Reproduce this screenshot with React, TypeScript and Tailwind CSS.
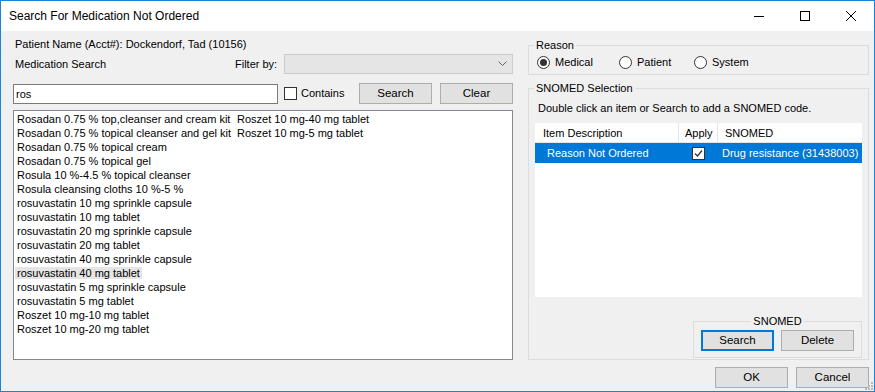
import { useState } from "react";

const leftColumn = [
  "Rosadan 0.75 % top,cleanser and cream kit",
  "Rosadan 0.75 % topical cleanser and gel kit",
  "Rosadan 0.75 % topical cream",
  "Rosadan 0.75 % topical gel",
  "Rosula 10 %-4.5 % topical cleanser",
  "Rosula cleansing cloths 10 %-5 %",
  "rosuvastatin 10 mg sprinkle capsule",
  "rosuvastatin 10 mg tablet",
  "rosuvastatin 20 mg sprinkle capsule",
  "rosuvastatin 20 mg tablet",
  "rosuvastatin 40 mg sprinkle capsule",
  "rosuvastatin 40 mg tablet",
  "rosuvastatin 5 mg sprinkle capsule",
  "rosuvastatin 5 mg tablet",
  "Roszet 10 mg-10 mg tablet",
  "Roszet 10 mg-20 mg tablet",
];

const rightColumn = ["Roszet 10 mg-40 mg tablet", "Roszet 10 mg-5 mg tablet"];

function WinButton({ label, focused }: { label: string; focused?: boolean }) {
  return (
    <button
      className={
        "flex h-[21px] w-[73px] items-center justify-center bg-[#e1e1e1] text-[11.5px] text-black " +
        (focused ? "border-2 border-[#0078d7]" : "border border-[#adadad]")
      }
    >
      {label}
    </button>
  );
}

function Radio({ label, checked, onClick }: { label: string; checked: boolean; onClick: () => void }) {
  return (
    <div className="flex cursor-default items-center gap-[5px]" onClick={onClick}>
      <span className="flex h-[13px] w-[13px] items-center justify-center rounded-full border border-[#333] bg-white">
        {checked && <span className="h-[7px] w-[7px] rounded-full bg-[#333]" />}
      </span>
      <span>{label}</span>
    </div>
  );
}

function ListRow({ text, hover }: { text: string; hover?: boolean }) {
  return (
    <div className="h-[14px] leading-[14px]">
      <span className={"whitespace-nowrap px-[2px] " + (hover ? "bg-[#e5e5e5]" : "")}>{text}</span>
    </div>
  );
}

export default function App() {
  const [reason, setReason] = useState("Medical");
  const [query, setQuery] = useState("ros");

  return (
    <div
      className="flex h-[392px] w-[875px] flex-col border border-[#1883d7] bg-[#f0f0f0] text-[12px] text-black"
      style={{ fontFamily: "'Liberation Sans', Arial, sans-serif" }}
    >
      {/* title bar */}
      <div className="flex h-[30px] shrink-0 items-center bg-white">
        <div className="flex-1 pl-[8px] text-[12px]">Search For Medication Not Ordered</div>
        <div className="flex h-full">
          <div className="flex w-[46px] items-center justify-center">
            <svg width="10" height="10" viewBox="0 0 10 10">
              <path d="M0 5.5h10" stroke="#000" strokeWidth="1" />
            </svg>
          </div>
          <div className="flex w-[46px] items-center justify-center">
            <svg width="10" height="10" viewBox="0 0 10 10">
              <rect x="0.5" y="0.5" width="9" height="9" fill="none" stroke="#000" strokeWidth="1" />
            </svg>
          </div>
          <div className="flex w-[46px] items-center justify-center">
            <svg width="10" height="10" viewBox="0 0 10 10">
              <path d="M0 0L10 10M10 0L0 10" stroke="#000" strokeWidth="1" />
            </svg>
          </div>
        </div>
      </div>

      <div className="relative flex flex-1 pl-[12px] pr-[5px] text-[11px]">
        {/* left side */}
        <div className="flex w-[500px] flex-col">
          <div className="mt-[6px] ml-[2px] h-[14px] leading-[14px]">
            Patient Name (Acct#): Dockendorf, Tad (10156)
          </div>
          <div className="mt-[3px] flex h-[20px] items-center">
            <span className="ml-[2px] w-[220px]">Medication Search</span>
            <span className="w-[49px]">Filter by:</span>
            <div className="flex h-[20px] flex-1 items-center justify-end border border-[#cccccc] bg-[#e5e5e5] pr-[5px]">
              <svg width="9" height="6" viewBox="0 0 9 6">
                <path d="M0.5 0.5L4.5 4.5L8.5 0.5" fill="none" stroke="#606060" strokeWidth="1" />
              </svg>
            </div>
          </div>
          <div className="mt-[9px] flex h-[21px] items-center">
            <input
              value={query}
              onChange={(e) => setQuery(e.target.value)}
              className="h-[20px] w-[265px] border border-[#7a7a7a] bg-white px-[2px] text-[11px] outline-none"
            />
            <span className="ml-[6px] h-[13px] w-[13px] border border-[#333] bg-white" />
            <span className="ml-[4px] w-[58px]">Contains</span>
            <WinButton label="Search" />
            <div className="w-[8px]" />
            <WinButton label="Clear" />
          </div>
          <div className="mt-[6px] flex h-[250px] border border-[#828790] bg-white pl-[1px] pt-[1px]">
            <div className="w-[220px]">
              {leftColumn.map((t) => (
                <ListRow key={t} text={t} hover={t === "rosuvastatin 40 mg tablet"} />
              ))}
            </div>
            <div>
              {rightColumn.map((t) => (
                <ListRow key={t} text={t} />
              ))}
            </div>
          </div>
        </div>

        {/* right side */}
        <div className="ml-[15px] flex w-[341px] flex-col">
          <fieldset className="mt-[7px] h-[37px] border border-[#dcdcdc] px-[8px]">
            <legend className="ml-[-3px] px-[2px] leading-[14px]">Reason</legend>
            <div className="mt-[2px] flex items-center">
              <div className="w-[82px]">
                <Radio label="Medical" checked={reason === "Medical"} onClick={() => setReason("Medical")} />
              </div>
              <div className="w-[75px]">
                <Radio label="Patient" checked={reason === "Patient"} onClick={() => setReason("Patient")} />
              </div>
              <Radio label="System" checked={reason === "System"} onClick={() => setReason("System")} />
            </div>
          </fieldset>

          <fieldset className="mt-[6px] border border-[#dcdcdc] px-[6px] pb-[1px]">
            <legend className="ml-[-1px] px-[2px] leading-[14px]">SNOMED Selection</legend>
            <div className="ml-[3px] mt-[6px] leading-[14px]">Double click an item or Search to add a SNOMED code.</div>
            <div className="mt-[8px] h-[174px] bg-white">
              <div className="flex h-[20px] items-center border-b border-[#e5e5e5]">
                <div className="h-full w-[144px] border-r border-[#e5e5e5] pl-[8px] leading-[20px]">Item Description</div>
                <div className="h-full w-[39px] border-r border-[#e5e5e5] pl-[6px] leading-[20px]">Apply</div>
                <div className="h-full flex-1 pl-[7px] leading-[20px]">SNOMED</div>
              </div>
              <div className="flex h-[20px] items-center whitespace-nowrap bg-[#0078d7] text-white">
                <div className="w-[144px] pl-[12px]">Reason Not Ordered</div>
                <div className="flex w-[39px] justify-center">
                  <svg width="13" height="13" viewBox="0 0 13 13">
                    <rect x="0.5" y="0.5" width="12" height="12" fill="#fff" stroke="#333" />
                    <path d="M3 6.5L5.5 9L10 3.5" fill="none" stroke="#333" strokeWidth="1.3" />
                  </svg>
                </div>
                <div className="flex-1 pl-[4px]">Drug resistance (31438003)</div>
              </div>
            </div>
            <div className="mt-[18px] flex justify-end">
              <fieldset className="h-[43px] w-[168px] border border-[#dcdcdc] px-[7px]">
                <legend className="mx-auto px-[2px] leading-[12px]">SNOMED</legend>
                <div className="mt-[3px] flex gap-[7px]">
                  <WinButton label="Search" focused />
                  <WinButton label="Delete" />
                </div>
              </fieldset>
            </div>
          </fieldset>

          <div className="mt-[7px] flex justify-end gap-[8px] pr-[0px]">
            <WinButton label="OK" />
            <WinButton label="Cancel" />
          </div>
        </div>

        {/* size grip */}
        <svg className="absolute bottom-[1px] right-[1px]" width="8" height="8" viewBox="0 0 8 8">
          <rect x="6" y="0" width="2" height="2" fill="#b8b8b8" />
          <rect x="3" y="3" width="2" height="2" fill="#b8b8b8" />
          <rect x="6" y="3" width="2" height="2" fill="#b8b8b8" />
          <rect x="0" y="6" width="2" height="2" fill="#b8b8b8" />
          <rect x="3" y="6" width="2" height="2" fill="#b8b8b8" />
          <rect x="6" y="6" width="2" height="2" fill="#b8b8b8" />
        </svg>
      </div>
    </div>
  );
}
